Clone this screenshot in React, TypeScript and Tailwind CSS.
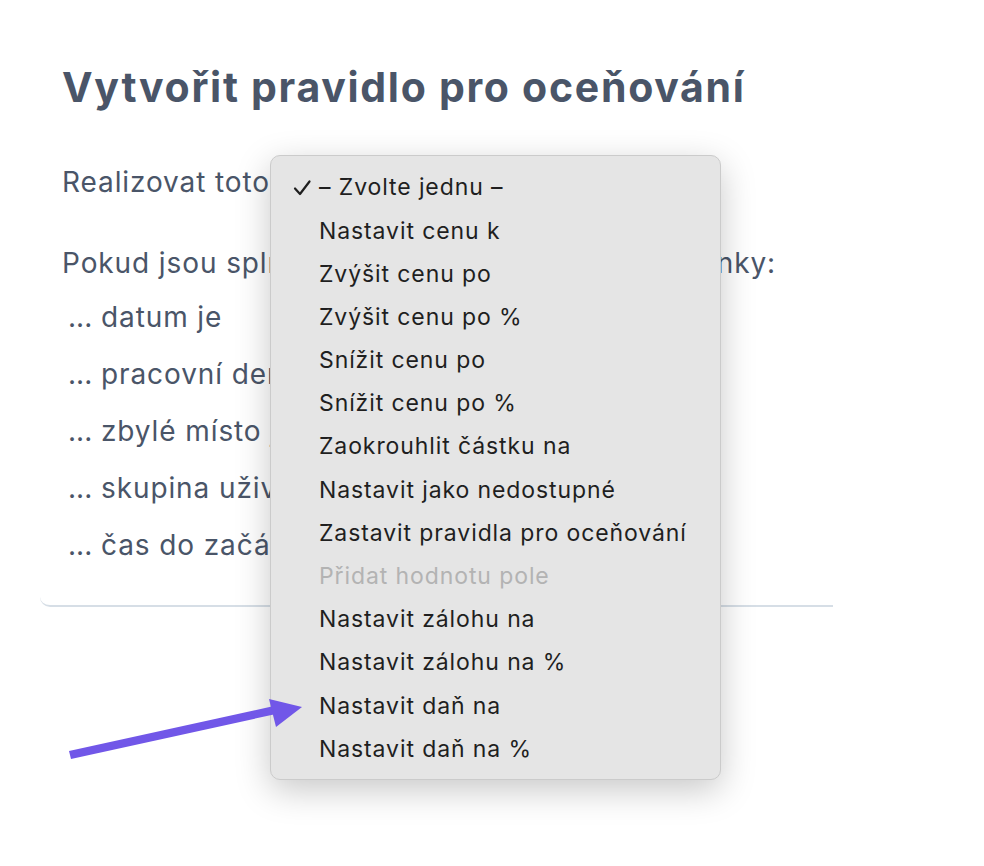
const items: { label: string; checked?: boolean; disabled?: boolean }[] = [
  { label: "– Zvolte jednu –", checked: true },
  { label: "Nastavit cenu k" },
  { label: "Zvýšit cenu po" },
  { label: "Zvýšit cenu po %" },
  { label: "Snížit cenu po" },
  { label: "Snížit cenu po %" },
  { label: "Zaokrouhlit částku na" },
  { label: "Nastavit jako nedostupné" },
  { label: "Zastavit pravidla pro oceňování" },
  { label: "Přidat hodnotu pole", disabled: true },
  { label: "Nastavit zálohu na" },
  { label: "Nastavit zálohu na %" },
  { label: "Nastavit daň na" },
  { label: "Nastavit daň na %" },
];

const conditions = [
  "datum je",
  "pracovní den je",
  "zbylé místo je",
  "skupina uživatelů je",
  "čas do začátku je",
];

const Check = () => (
  <svg viewBox="0 0 20 20" className="h-[20px] w-[20px]" fill="none">
    <path d="M3 10.5 L8 16 L17.5 3.5" stroke="#1f1f1f" strokeWidth="2.2" strokeLinecap="round" strokeLinejoin="round" />
  </svg>
);

export default function App() {
  return (
    <div className="relative h-[866px] w-[984px] overflow-hidden bg-white font-['Inter',sans-serif]">
      {/* Card */}
      <div className="ml-[40px] w-[793px] rounded-bl-[10px] border-b-2 border-[#d6dee6] pb-[31px] pl-[22px] pt-[62px] text-[#4a5568]">
        <h1 className="text-[41px] font-bold leading-[50px] tracking-[1.7px]">Vytvořit pravidlo pro oceňování</h1>

        <p className="mt-[50px] text-[28px] leading-[40px] tracking-[0.9px]">Realizovat toto</p>

        <p className="mt-[41px] text-[28px] leading-[40px] tracking-[0.9px]">Pokud jsou splněny všechny následující podmínky:</p>

        <ul className="mt-[6px] pl-[6px]">
          {conditions.map((c) => (
            <li key={c} className="text-[28px] leading-[57px] tracking-[0.9px]">
              <span className="tracking-normal">...</span> {c}
            </li>
          ))}
        </ul>
      </div>

      {/* Open select menu */}
      <div className="absolute left-[270px] top-[155px] w-[451px] rounded-[10px] border border-[#cbcbcb] bg-[#e5e5e5] pb-[8px] pt-[10px] shadow-[0_10px_35px_rgba(0,0,0,0.22)]">
        {items.map((it) => (
          <div
            key={it.label}
            className={`flex h-[43.2px] items-center text-[23px] tracking-[0.9px] ${it.disabled ? "text-[#b3b3b3]" : "text-[#1f1f1f]"}`}
          >
            <span className="flex w-[48px] justify-end pr-[7px]">{it.checked && <Check />}</span>
            <span>{it.label}</span>
          </div>
        ))}
      </div>

      {/* Annotation arrow */}
      <svg className="absolute left-0 top-0" width="984" height="866" viewBox="0 0 984 866">
        <polygon points="69,751 71,759 276,714 274,706" fill="#7157e8" />
        <polygon points="269,699 302,707 276,727" fill="#7157e8" />
      </svg>
    </div>
  );
}
